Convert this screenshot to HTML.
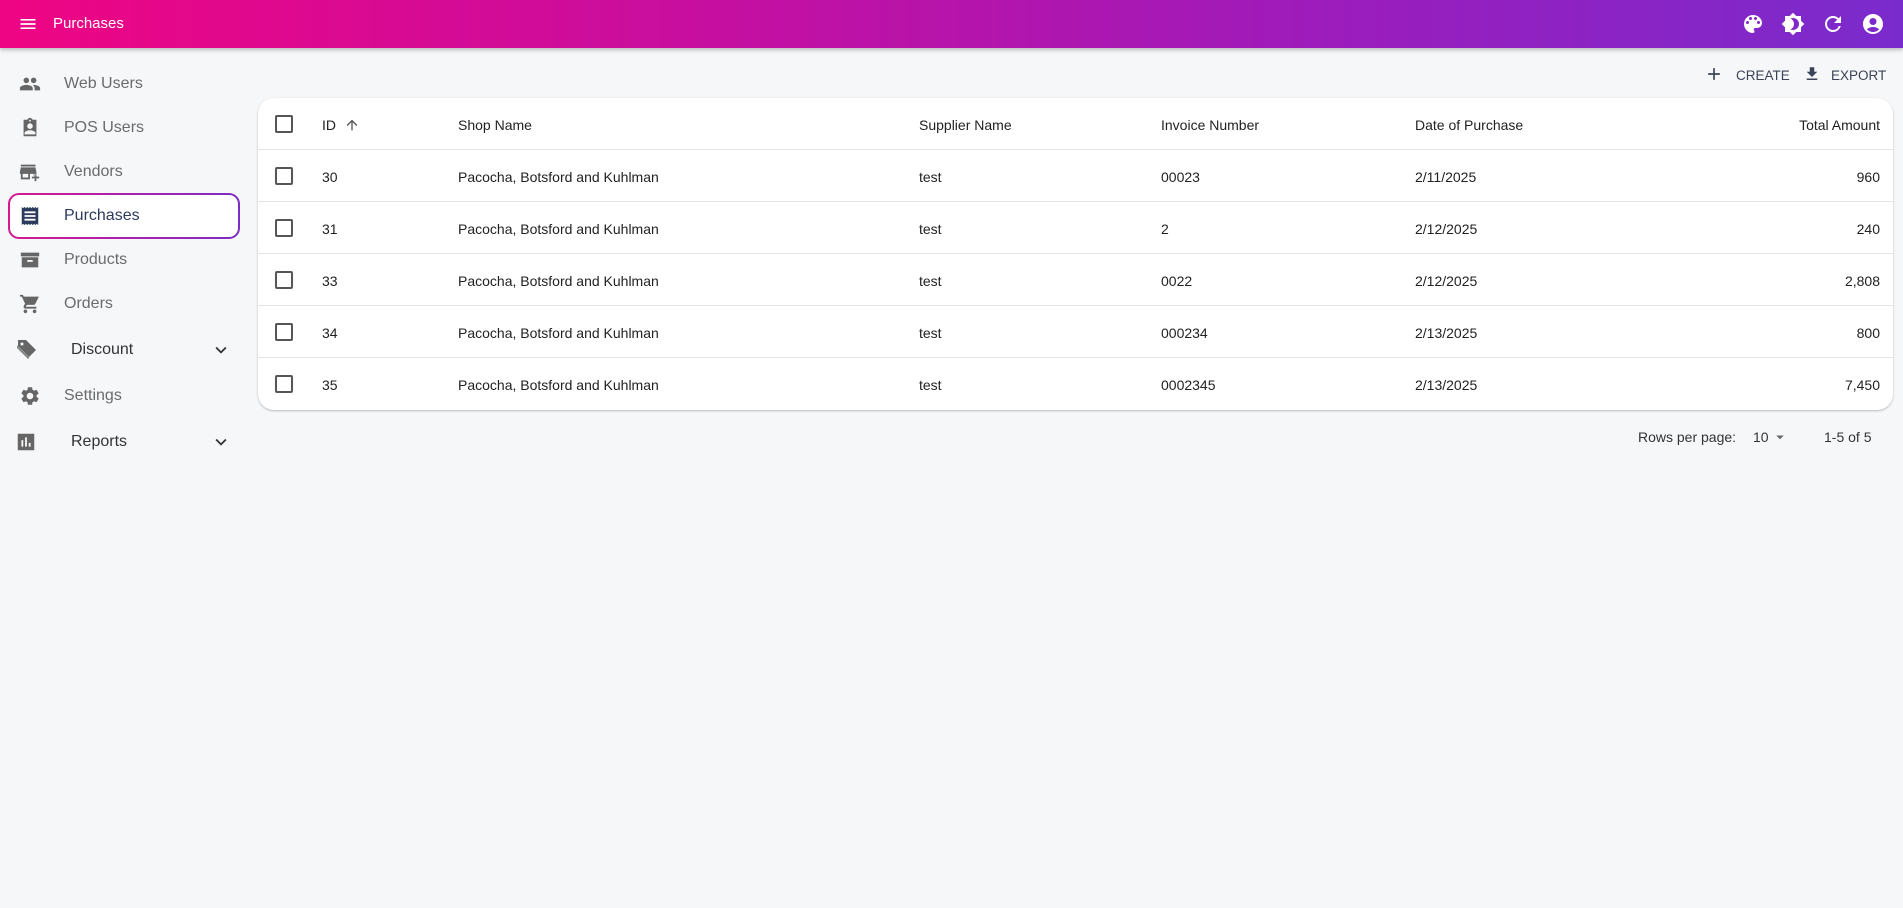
<!DOCTYPE html>
<html><head><meta charset="utf-8"><style>
*{box-sizing:border-box;margin:0;padding:0}
body{width:1903px;height:908px;background:#f6f7f9;font-family:"Liberation Sans",Arial,sans-serif;overflow:hidden;position:relative}
.bar{position:absolute;left:0;top:0;width:1903px;height:48px;background:linear-gradient(90deg,#ee0583 0%,#c90e9e 35%,#9c1cbc 70%,#7a2bcc 100%);box-shadow:0 2px 4px rgba(0,0,0,.25);color:#fff}
.bar .t{position:absolute;left:53px;top:15px;font-size:15px}
.ic{position:absolute}
.side .it{position:absolute;left:0;height:44px;width:240px;color:#6b6b6b;font-size:16px}
.side .it span{position:absolute;left:64px;top:14px}
.side svg{position:absolute;left:19px;top:12px;width:22px;height:22px;fill:#666}
.sel{position:absolute;left:8px;top:193px;width:232px;height:46px;border-radius:11px;background:linear-gradient(90deg,#d6198f,#7e2bc8);padding:2px}
.sel div{width:100%;height:100%;border-radius:9px;background:#fff}
.card{position:absolute;left:258px;top:98px;width:1635px;height:312px;background:#fff;border-radius:16px;box-shadow:0 1px 2px rgba(0,0,0,.25)}
.row{position:absolute;left:0;width:1635px;height:52px;border-bottom:1px solid #e4e4e4;font-size:14px;color:#222}
.row:last-child{border-bottom:none}
.row div{position:absolute;top:19px}
.cb{position:absolute;left:17px;top:17px;width:18px;height:18px;border:2px solid #555;border-radius:2px}
.c1{left:64px}.c2{left:200px}.c3{left:661px}.c4{left:903px}.c5{left:1157px}.c6{right:13px;text-align:right}
.btn{position:absolute;top:68px;font-size:13.5px;color:#3b4356}
.pg{position:absolute;top:429px;font-size:14px;color:#333}
</style></head><body>
<div class="bar">
<svg class="ic" style="left:17px;top:14px" width="22" height="20" viewBox="0 0 24 24" fill="#fff"><path d="M3 18h18v-2H3v2zm0-5h18v-2H3v2zm0-7v2h18V6H3z"/></svg>
<div class="t">Purchases</div>
<svg class="ic" style="left:1741px;top:12px" width="24" height="24" viewBox="0 0 24 24" fill="#fff"><path d="M12 3a9 9 0 0 0 0 18c.83 0 1.5-.67 1.5-1.5 0-.39-.15-.74-.39-1.01-.23-.26-.38-.61-.38-.99 0-.83.67-1.5 1.5-1.5H16c2.76 0 5-2.240 5-5 0-4.42-4.03-8-9-8zm-5.5 9a1.5 1.5 0 1 1 0-3 1.5 1.5 0 0 1 0 3zm3-4a1.5 1.5 0 1 1 0-3 1.5 1.5 0 0 1 0 3zm5 0a1.5 1.5 0 1 1 0-3 1.5 1.5 0 0 1 0 3zm3 4a1.5 1.5 0 1 1 0-3 1.5 1.5 0 0 1 0 3z"/></svg>
<svg class="ic" style="left:1781px;top:12px" width="24" height="24" viewBox="0 0 24 24" fill="#fff"><path d="M20 8.69V4h-4.69L12 .69 8.69 4H4v4.69L.69 12 4 15.31V20h4.69L12 23.31 15.31 20H20v-4.69L23.31 12 20 8.69zM12 18c-.89 0-1.74-.2-2.5-.55C11.56 16.5 13 14.420 13 12s-1.44-4.5-3.5-5.45C10.26 6.2 11.11 6 12 6c3.31 0 6 2.69 6 6s-2.690 6-6 6z"/></svg>
<svg class="ic" style="left:1821px;top:12px" width="24" height="24" viewBox="0 0 24 24" fill="#fff"><path d="M17.65 6.35A7.958 7.958 0 0 0 12 4c-4.42 0-7.99 3.58-7.99 8s3.57 8 7.99 8c3.73 0 6.84-2.55 7.73-6h-2.08A5.99 5.99 0 0 1 12 18c-3.31 0-6-2.69-6-6s2.69-6 6-6c1.66 0 3.14.69 4.22 1.78L13 11h7V4l-2.35 2.35z"/></svg>
<svg class="ic" style="left:1861px;top:12px" width="24" height="24" viewBox="0 0 24 24" fill="#fff"><path d="M12 2C6.48 2 2 6.48 2 12s4.48 10 10 10 10-4.48 10-10S17.52 2 12 2zm0 4c1.93 0 3.5 1.57 3.5 3.5S13.93 13 12 13s-3.5-1.57-3.5-3.5S10.07 6 12 6zm0 14c-2.03 0-4.43-.82-6.14-2.88a9.947 9.947 0 0 1 12.28 0C16.43 19.18 14.03 20 12 20z"/></svg>
</div>
<div class="sel"><div></div></div>
<div class="side">
<div class="it" style="top:61px"><svg viewBox="0 0 24 24"><path d="M16 11c1.66 0 2.99-1.34 2.99-3S17.66 5 16 5c-1.66 0-3 1.34-3 3s1.34 3 3 3zm-8 0c1.66 0 2.99-1.34 2.99-3S9.66 5 8 5C6.34 5 5 6.34 5 8s1.34 3 3 3zm0 2c-2.33 0-7 1.17-7 3.5V19h14v-2.5c0-2.33-4.67-3.5-7-3.5zm8 0c-.29 0-.62.02-.97.05 1.16.84 1.97 1.97 1.97 3.45V19h6v-2.5c0-2.33-4.67-3.5-7-3.5z"/></svg><span>Web Users</span></div>
<div class="it" style="top:105px"><svg viewBox="0 0 24 24"><path d="M19 3h-4.18C14.4 1.84 13.3 1 12 1s-2.4.84-2.82 2H5v18h14V3zm-7 0c.55 0 1 .45 1 1s-.45 1-1 1-1-.45-1-1 .45-1 1-1zm0 4c1.66 0 3 1.34 3 3s-1.34 3-3 3-3-1.34-3-3 1.34-3 3-3zm6 12H6v-1.4c0-2 4-3.1 6-3.1s6 1.1 6 3.1V19z"/></svg><span>POS Users</span></div>
<div class="it" style="top:149px"><svg viewBox="0 0 24 24"><path d="M18 4H2v2h16V4zm1 10v-2l-1-5H2l-1 5v2h1v6h10v-6h4v2h2v-2h1zm-9 4H4v-4h6v4zm12 1h-3v3h-2v-3h-3v-2h3v-3h2v3h3v2z"/></svg><span>Vendors</span></div>
<div class="it" style="top:193px"><svg viewBox="0 0 24 24" style="fill:#2c3a5c"><path d="M19.5 3.5 18 2l-1.5 1.5L15 2l-1.5 1.5L12 2l-1.5 1.5L9 2 7.5 3.5 6 2 4.5 3.5 3 2v20l1.5-1.5L6 22l1.5-1.5L9 22l1.5-1.5L12 22l1.5-1.5L15 22l1.5-1.5L18 22l1.5-1.5L21 22V2l-1.5 1.5zM18 17H6v-2h12v2zm0-4H6v-2h12v2zm0-4H6V7h12v2z"/></svg><span style="color:#2c3a5c">Purchases</span></div>
<div class="it" style="top:237px"><svg viewBox="0 0 24 24"><path d="M2 4v4h20V4H2zm1 5v11h18V9H3zm12 5H9v-2h6v2z"/></svg><span>Products</span></div>
<div class="it" style="top:281px"><svg viewBox="0 0 24 24"><path d="M7 18c-1.1 0-1.99.9-1.99 2S5.9 22 7 22s2-.9 2-2-.9-2-2-2zM1 2v2h2l3.6 7.59-1.35 2.45C4.52 15.37 5.48 17 7 17h12v-2H7.42l1.1-2h7.45c.75 0 1.41-.41 1.75-1.03L21.7 4H5.21l-.94-2H1zm16 16c-1.1 0-1.99.9-1.99 2s.89 2 1.99 2 2-.9 2-2-.9-2-2-2z"/></svg><span>Orders</span></div>
<div class="it" style="top:327px"><svg viewBox="0 0 24 24" style="left:15px;top:10px;width:24px;height:24px"><path d="M3 3h8l10 10-7 7L3 9V3zm4 2.5A1.5 1.5 0 1 0 7 8.5 1.5 1.5 0 0 0 7 5.5z"/><path d="M2 11l11 11 1.4-1.4L2 8.2z" opacity=".8"/></svg><span style="left:71px;color:#333">Discount</span><svg viewBox="0 0 24 24" style="left:210px;top:12px;width:22px;fill:#333"><path d="M16.59 8.59 12 13.17 7.41 8.59 6 10l6 6 6-6z"/></svg></div>
<div class="it" style="top:373px"><svg viewBox="0 0 24 24"><path d="M19.14 12.94c.04-.3.06-.61.06-.94 0-.32-.02-.64-.07-.94l2.03-1.58a.49.49 0 0 0 .12-.61l-1.92-3.32a.488.488 0 0 0-.59-.22l-2.39.96c-.5-.38-1.03-.7-1.62-.94l-.36-2.54a.484.484 0 0 0-.48-.41h-3.84c-.24 0-.43.17-.47.41l-.36 2.54c-.59.24-1.130.57-1.62.94l-2.39-.96c-.22-.08-.47 0-.59.22L2.74 8.87c-.12.21-.08.47.12.61l2.03 1.58c-.05.3-.09.63-.09.94s.02.64.07.94l-2.03 1.58a.49.49 0 0 0-.12.61l1.92 3.32c.12.22.37.29.59.22l2.39-.96c.5.38 1.03.7 1.62.94l.36 2.54c.05.24.24.41.48.41h3.84c.24 0 .44-.17.47-.41l.36-2.54c.59-.24 1.13-.56 1.62-.94l2.39.96c.22.08.47 0 .59-.22l1.92-3.32c.12-.22.07-.47-.12-.61l-2.01-1.58zM12 15.6c-1.98 0-3.6-1.62-3.6-3.6s1.62-3.6 3.6-3.6 3.6 1.62 3.6 3.6-1.62 3.6-3.6 3.6z"/></svg><span>Settings</span></div>
<div class="it" style="top:419px"><svg viewBox="0 0 24 24" style="left:15px"><path d="M3 3v18h18V3H3zm6 14H7v-7h2v7zm4 0h-2V7h2v10zm4 0h-2v-4h2v4z"/></svg><span style="left:71px;color:#333">Reports</span><svg viewBox="0 0 24 24" style="left:210px;top:12px;width:22px;fill:#333"><path d="M16.59 8.59 12 13.17 7.41 8.59 6 10l6 6 6-6z"/></svg></div>
</div>
<svg class="ic" style="left:1704px;top:64px" width="20" height="20" viewBox="0 0 24 24" fill="#3b4356"><path d="M19 13h-6v6h-2v-6H5v-2h6V5h2v6h6v2z"/></svg>
<div class="btn" style="left:1736px">CREATE</div>
<svg class="ic" style="left:1803px;top:65px" width="18" height="18" viewBox="0 0 24 24" fill="#3b4356"><path d="M19 9h-4V3H9v6H5l7 7 7-7zM5 18v2h14v-2H5z"/></svg>
<div class="btn" style="left:1831px">EXPORT</div>
<div class="card">
<div class="row" style="top:0"><span class="cb"></span><div class="c1">ID <svg style="vertical-align:-3px;margin-left:4px" width="16" height="16" viewBox="0 0 24 24" fill="#555"><path d="m4 12 1.41 1.41L11 7.83V20h2V7.83l5.58 5.59L20 12l-8-8-8 8z"/></svg></div><div class="c2">Shop Name</div><div class="c3">Supplier Name</div><div class="c4">Invoice Number</div><div class="c5">Date of Purchase</div><div class="c6">Total Amount</div></div>
<div class="row" style="top:52px"><span class="cb"></span><div class="c1">30</div><div class="c2">Pacocha, Botsford and Kuhlman</div><div class="c3">test</div><div class="c4">00023</div><div class="c5">2/11/2025</div><div class="c6">960</div></div>
<div class="row" style="top:104px"><span class="cb"></span><div class="c1">31</div><div class="c2">Pacocha, Botsford and Kuhlman</div><div class="c3">test</div><div class="c4">2</div><div class="c5">2/12/2025</div><div class="c6">240</div></div>
<div class="row" style="top:156px"><span class="cb"></span><div class="c1">33</div><div class="c2">Pacocha, Botsford and Kuhlman</div><div class="c3">test</div><div class="c4">0022</div><div class="c5">2/12/2025</div><div class="c6">2,808</div></div>
<div class="row" style="top:208px"><span class="cb"></span><div class="c1">34</div><div class="c2">Pacocha, Botsford and Kuhlman</div><div class="c3">test</div><div class="c4">000234</div><div class="c5">2/13/2025</div><div class="c6">800</div></div>
<div class="row" style="top:260px"><span class="cb"></span><div class="c1">35</div><div class="c2">Pacocha, Botsford and Kuhlman</div><div class="c3">test</div><div class="c4">0002345</div><div class="c5">2/13/2025</div><div class="c6">7,450</div></div>
</div>
<div class="pg" style="left:1638px">Rows per page:</div>
<div class="pg" style="left:1753px">10</div>
<svg class="ic" style="left:1771px;top:428px" width="18" height="18" viewBox="0 0 24 24" fill="#666"><path d="m7 10 5 5 5-5z"/></svg>
<div class="pg" style="left:1824px">1-5 of 5</div>
</body></html>
